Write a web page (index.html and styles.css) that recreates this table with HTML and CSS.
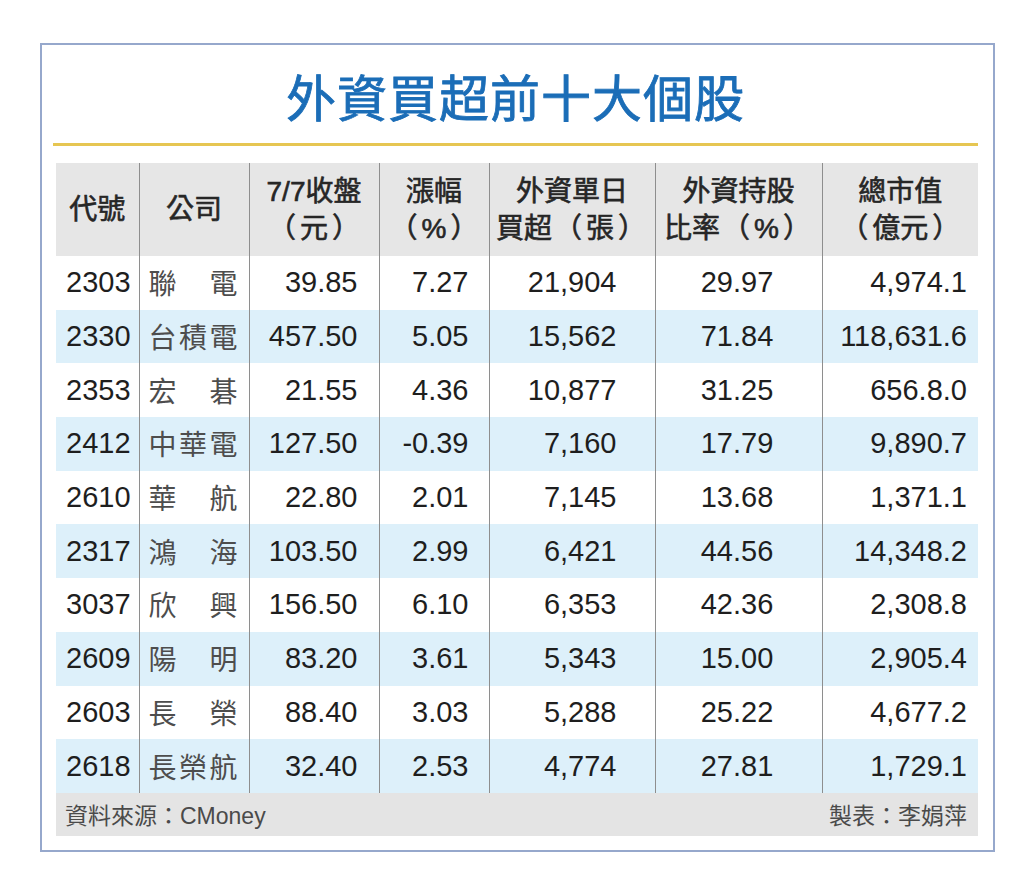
FILE: index.html
```html
<!DOCTYPE html>
<html lang="zh-Hant">
<head>
<meta charset="utf-8">
<title>外資買超前十大個股</title>
<link rel="stylesheet" href="styles.css">
</head>
<body>
<div class="frame">
  <h1 class="title">外資買超前十大個股</h1>
  <div class="rule"></div>
  <table class="stocks">
    <colgroup>
      <col class="c1"><col class="c2"><col class="c3"><col class="c4"><col class="c5"><col class="c6"><col class="c7">
    </colgroup>
    <thead>
      <tr>
        <th>代號</th>
        <th>公司</th>
        <th>7/7收盤<br><span class="lp">（</span>元<span class="rp">）</span></th>
        <th>漲幅<br><span class="lp">（</span>%<span class="rp">）</span></th>
        <th>外資單日<br>買超<span class="lp">（</span>張<span class="rp">）</span></th>
        <th>外資持股<br>比率<span class="lp">（</span>%<span class="rp">）</span></th>
        <th>總市值<br><span class="lp">（</span>億元<span class="rp">）</span></th>
      </tr>
    </thead>
    <tbody>
      <tr><td class="code">2303</td><td class="name">聯電</td><td class="price">39.85</td><td class="chg">7.27</td><td class="buy">21,904</td><td class="ratio">29.97</td><td class="cap">4,974.1</td></tr>
      <tr><td class="code">2330</td><td class="name">台積電</td><td class="price">457.50</td><td class="chg">5.05</td><td class="buy">15,562</td><td class="ratio">71.84</td><td class="cap">118,631.6</td></tr>
      <tr><td class="code">2353</td><td class="name">宏碁</td><td class="price">21.55</td><td class="chg">4.36</td><td class="buy">10,877</td><td class="ratio">31.25</td><td class="cap">656.8.0</td></tr>
      <tr><td class="code">2412</td><td class="name">中華電</td><td class="price">127.50</td><td class="chg">-0.39</td><td class="buy">7,160</td><td class="ratio">17.79</td><td class="cap">9,890.7</td></tr>
      <tr><td class="code">2610</td><td class="name">華航</td><td class="price">22.80</td><td class="chg">2.01</td><td class="buy">7,145</td><td class="ratio">13.68</td><td class="cap">1,371.1</td></tr>
      <tr><td class="code">2317</td><td class="name">鴻海</td><td class="price">103.50</td><td class="chg">2.99</td><td class="buy">6,421</td><td class="ratio">44.56</td><td class="cap">14,348.2</td></tr>
      <tr><td class="code">3037</td><td class="name">欣興</td><td class="price">156.50</td><td class="chg">6.10</td><td class="buy">6,353</td><td class="ratio">42.36</td><td class="cap">2,308.8</td></tr>
      <tr><td class="code">2609</td><td class="name">陽明</td><td class="price">83.20</td><td class="chg">3.61</td><td class="buy">5,343</td><td class="ratio">15.00</td><td class="cap">2,905.4</td></tr>
      <tr><td class="code">2603</td><td class="name">長榮</td><td class="price">88.40</td><td class="chg">3.03</td><td class="buy">5,288</td><td class="ratio">25.22</td><td class="cap">4,677.2</td></tr>
      <tr><td class="code">2618</td><td class="name">長榮航</td><td class="price">32.40</td><td class="chg">2.53</td><td class="buy">4,774</td><td class="ratio">27.81</td><td class="cap">1,729.1</td></tr>
    </tbody>
  </table>
  <div class="foot">
    <span>資料來源：CMoney</span>
    <span>製表：李娟萍</span>
  </div>
</div>
</body>
</html>
```

FILE: styles.css
```css
html, body {
  margin: 0;
  padding: 0;
  background: #ffffff;
}

body {
  font-family: "Liberation Sans", "Noto Sans CJK TC", sans-serif;
  color: #1e1e1e;
  text-spacing-trim: space-all;
}

.frame {
  box-sizing: border-box;
  width: 955px;
  margin: 43px 0 0 40px;
  padding: 0 15px 14px 11px;
  border: 2px solid #96a8cc;
  background: #ffffff;
}

.title {
  margin: 0;
  padding-top: 4px;
  height: 94px;
  line-height: 92px;
  text-align: center;
  font-family: "Noto Sans CJK TC", sans-serif;
  font-weight: 400;
  font-size: 50px;
  letter-spacing: 1px;
  color: #1b6db7;
  -webkit-text-stroke: 0.8px #1b6db7;
}

.rule {
  height: 3px;
  width: 925px;
  background: #e6c652;
}

.stocks {
  margin: 17px 0 0 3px;
  width: 922px;
  border-collapse: collapse;
  table-layout: fixed;
}

.c1 { width: 83px; }
.c2 { width: 110px; }
.c3 { width: 130px; }
.c4 { width: 110px; }
.c5 { width: 166px; }
.c6 { width: 167px; }
.c7 { width: 156px; }

.stocks th,
.stocks td {
  padding: 0;
  border-left: 1px solid #8e8e8e;
}

.stocks th:first-child,
.stocks td:first-child {
  border-left: none;
}

.stocks thead tr {
  background: #e6e6e6;
}

.stocks th {
  height: 93px;
  font-family: "Liberation Sans", "Noto Sans CJK TC", sans-serif;
  font-weight: 400;
  font-size: 28px;
  line-height: 37px;
  color: #262626;
  -webkit-text-stroke: 0.6px #262626;
  text-align: center;
  vertical-align: middle;
  white-space: nowrap;
}

.lp {
  margin-left: 2px;
  margin-right: 4px;
}

.rp {
  margin-left: 4px;
  margin-right: 2px;
}

.stocks td {
  height: 53.7px;
  font-size: 29px;
  line-height: 53px;
  color: #1e1e1e;
  vertical-align: middle;
  white-space: nowrap;
}

.stocks tbody tr:nth-child(even) {
  background: #ddf0fa;
}

.code {
  text-align: left;
  padding-left: 10px !important;
}

.name {
  font-family: "Noto Sans CJK TC", sans-serif;
  font-size: 28px !important;
  color: #4d4d4d !important;
  text-align: justify;
  text-align-last: justify;
  padding: 0 11px 0 9px !important;
}

.price {
  text-align: right;
  padding-right: 21px !important;
}

.chg {
  text-align: right;
  padding-right: 20px !important;
}

.buy {
  text-align: right;
  padding-right: 38px !important;
}

.ratio {
  text-align: center;
  padding-right: 3px !important;
}

.cap {
  text-align: right;
  padding-right: 11px !important;
}

.foot {
  margin-left: 3px;
  width: 922px;
  height: 43px;
  box-sizing: border-box;
  padding: 0 11px 0 9px;
  display: flex;
  justify-content: space-between;
  align-items: center;
  background: #e4e4e4;
  font-family: "Liberation Sans", "Noto Sans CJK TC", sans-serif;
  font-size: 23px;
  color: #4a4a4a;
}
```
